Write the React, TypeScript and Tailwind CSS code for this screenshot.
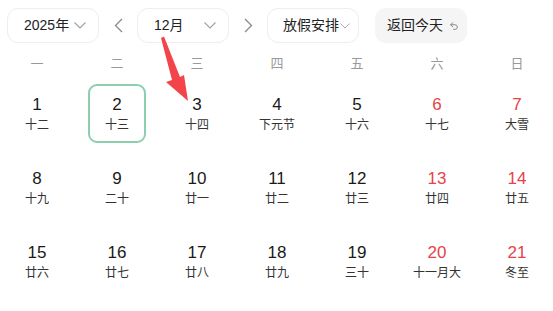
import React from "react";

const font = { fontFamily: '"Liberation Sans", "Noto Sans CJK SC", sans-serif' };

type Day = { d: number; l: string; red?: boolean };

const days: Day[] = [
  { d: 1, l: "十二" }, { d: 2, l: "十三" }, { d: 3, l: "十四" }, { d: 4, l: "下元节" }, { d: 5, l: "十六" }, { d: 6, l: "十七", red: true }, { d: 7, l: "大雪", red: true },
  { d: 8, l: "十九" }, { d: 9, l: "二十" }, { d: 10, l: "廿一" }, { d: 11, l: "廿二" }, { d: 12, l: "廿三" }, { d: 13, l: "廿四", red: true }, { d: 14, l: "廿五", red: true },
  { d: 15, l: "廿六" }, { d: 16, l: "廿七" }, { d: 17, l: "廿八" }, { d: 18, l: "廿九" }, { d: 19, l: "三十" }, { d: 20, l: "十一月大", red: true }, { d: 21, l: "冬至", red: true },
];

const weeks = ["一", "二", "三", "四", "五", "六", "日"];

function Chevron({ w = 12 }: { w?: number }) {
  return (
    <svg width={w} height={w / 2 + 1} viewBox="0 0 12 7" fill="none" stroke="#a0a0a0" strokeWidth="1.1">
      <path d="M0.5 0.5 6 6 11.5 0.5" />
    </svg>
  );
}

function Arrow({ dir }: { dir: "l" | "r" }) {
  return (
    <svg width="9" height="15" viewBox="0 0 9 15" fill="none" stroke="#8a8a8a" strokeWidth="1.3">
      {dir === "l" ? <path d="M8 1 1.5 7.5 8 14" /> : <path d="M1 1 7.5 7.5 1 14" />}
    </svg>
  );
}

export default function App() {
  return (
    <div className="relative w-[553px] h-[311px] bg-white overflow-hidden text-[#222]" style={font}>
      <div className="flex items-start h-[52px] pt-[8px] pl-[7px]">
        <div className="flex items-center justify-between w-[92px] h-[35px] rounded-[11px] border border-[#eeeeee] pl-[16px] pr-[12px] text-[14px]">
          <span>2025年</span>
          <Chevron />
        </div>
        <div className="w-[38px] h-[35px] flex items-center justify-center"><Arrow dir="l" /></div>
        <div className="flex items-center justify-between w-[92px] h-[35px] rounded-[11px] border border-[#eeeeee] pl-[16px] pr-[12px] text-[14px]">
          <span>12月</span>
          <Chevron />
        </div>
        <div className="w-[38px] h-[35px] flex items-center justify-center"><Arrow dir="r" /></div>
        <div className="flex items-center justify-between w-[92px] h-[35px] rounded-[11px] border border-[#eeeeee] pl-[15px] pr-[8px] text-[14px]">
          <span>放假安排</span>
          <Chevron w={10} />
        </div>
        <div className="ml-[16px] flex items-center gap-[6px] w-[92px] h-[35px] rounded-[11px] bg-[#f5f5f5] pl-[12px] text-[14px]">
          <span>返回今天</span>
          <svg width="10" height="10" viewBox="0 0 24 24" fill="none" stroke="#8a8a8a" strokeWidth="2.4" strokeLinecap="round" strokeLinejoin="round">
            <path d="M9 14 4 9l5-5" />
            <path d="M4 9h10.5a5.5 5.5 0 0 1 5.5 5.5 5.5 5.5 0 0 1-5.5 5.5H11" />
          </svg>
        </div>
      </div>
      <div className="ml-[-3px] grid grid-cols-[repeat(7,80px)]">
        {weeks.map((w) => (
          <div key={w} className="h-[24px] flex items-center justify-center text-[13px] text-[#999]">{w}</div>
        ))}
        {days.map((x) => (
          <div key={x.d} className="h-[74px] flex items-center justify-center">
            <div
              className={
                "w-[58px] h-[59px] rounded-[9px] flex flex-col items-center justify-center pt-[4px] border-2 " +
                (x.d === 2 ? "border-[#8ccfae]" : "border-transparent")
              }
            >
              <div className={"text-[17px] leading-[20px] " + (x.red ? "text-[#e8414a]" : "text-[#1a1a1a]")}>{x.d}</div>
              <div className="text-[12px] leading-[20px] text-[#333]">{x.l}</div>
            </div>
          </div>
        ))}
      </div>
      <svg className="absolute left-0 top-0 pointer-events-none" width="553" height="311">
        <polygon points="161,38 164,36.5 180,77 184,75 188,101 166,82 172,80" fill="#f2444a" />
      </svg>
    </div>
  );
}
